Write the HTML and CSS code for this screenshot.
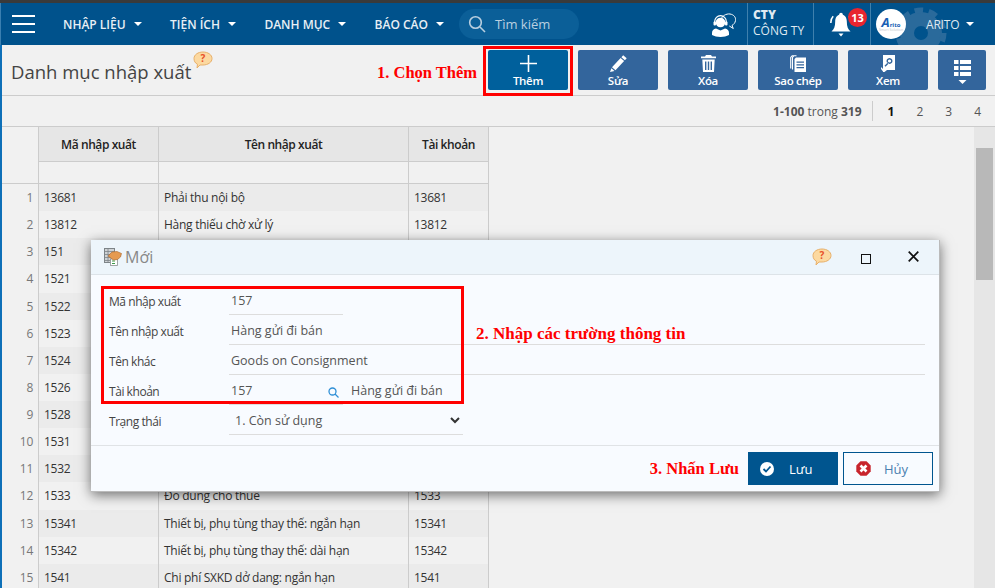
FILE: index.html
```html
<!DOCTYPE html>
<html lang="vi">
<head>
<meta charset="utf-8">
<title>Danh mục nhập xuất</title>
<link rel="stylesheet" href="styles.css">
</head>
<body>
<div class="topline"></div>
<header class="nav">
  <button class="burger" aria-label="menu"><i></i><i></i><i></i></button>
  <nav class="menu">
    <a>NHẬP LIỆU<b class="caret"></b></a>
    <a>TIỆN ÍCH<b class="caret"></b></a>
    <a>DANH MỤC<b class="caret"></b></a>
    <a>BÁO CÁO<b class="caret"></b></a>
  </nav>
  <div class="search">
    <svg width="18" height="18" viewBox="0 0 18 18" fill="none" stroke="#b9cfe0" stroke-width="1.6"><circle cx="7.5" cy="7.5" r="5.8"/><path d="M12 12l5 5"/></svg>
    <span>Tìm kiếm</span>
  </div>
  <div class="nav-right">
    <div class="support">
      <svg width="24" height="24" viewBox="0 0 24 24"><path d="M9 6.500C10 3 14 .5 18 1c4 .6 6 3.500 5.500 6.500-.3 2.500-2 4-3.500 5l1.300 3-4-2.500" fill="none" stroke="#fff" stroke-width="1"/><circle cx="8.500" cy="9.500" r="4.800" fill="#fff"/><path d="M2.700 10V8.500a5.800 5.800 0 0 1 11.600 0V10" fill="none" stroke="#fff" stroke-width="1.200"/><rect x="1.500" y="8.500" width="2.500" height="4" rx="1" fill="#fff"/><rect x="13" y="8.500" width="2.500" height="4" rx="1" fill="#fff"/><path d="M4 15.500l4.500 2 4.500-2c2.500.5 4 2 4 4.500v2c-2.500 1.200-5 2-8.500 2S2.500 23 0 22v-2c0-2.500 1.500-4 4-4.500z" fill="#fff"/></svg>
    </div>
    <div class="company"><strong>CTY</strong><span>CÔNG TY</span></div>
    <div class="bell">
      <svg width="22" height="25" viewBox="0 0 22 25" fill="#fff"><circle cx="11" cy="2.500" r="1.800"/><path d="M11 2.500c3.800 0 5.800 3 5.800 7 0 5 1.300 8 3.700 10H1.500c2.400-2 3.700-5 3.700-10 0-4 2-7 5.800-7z"/><path d="M8.500 21.500h5L11 24.500z"/><path d="M.9 11c-.2-2.800.6-5 2.300-6.800M21.100 11c.2-2.800-.6-5-2.300-6.800" fill="none" stroke="#fff" stroke-width="1.600"/></svg>
      <span class="badge">13</span>
    </div>
    <div class="user">
      <svg class="gear" width="52" height="52" viewBox="-26 -26 52 52" fill="none" stroke="#2a6a9b"><circle r="14" stroke-width="14"/><circle r="22.500" stroke-width="6" stroke-dasharray="8.500 5.637"/></svg>
      <span class="avatar"><span class="logo"><span class="logo-a">A</span><span class="logo-t">rito</span></span><span class="logo-s">Smart Solution</span></span>
      <span class="uname">ARITO</span><b class="caret"></b>
    </div>
  </div>
</header>

<main class="page">
  <section class="titlebar">
    <h1>Danh mục nhập xuất</h1>
    <svg class="help help-title" width="20" height="18" viewBox="0 0 20 18"><path d="M10 1c5 0 9 2.800 9 6.500S15 14 10 14H7l-3 3 .5-3.700C2.200 12.200 1 10 1 7.500 1 3.800 5 1 10 1z" fill="#fcd9a0" stroke="#e8b06a"/><text x="10" y="11" text-anchor="middle" class="help-q">?</text></svg>
    <span class="note note-1">1. Chọn Thêm</span>
    <div class="tools">
      <button class="tool primary">
        <svg width="17" height="17" viewBox="0 0 17 17" stroke="#fff" stroke-width="1.600"><path d="M8.500 0v17M0 8.500h17"/></svg>
        <span>Thêm</span>
      </button>
      <button class="tool">
        <svg width="17" height="17" viewBox="0 0 17 17" fill="#fff"><path d="M13.200.3l3.500 3-1.800 2-3.500-3.100zM10.600 3l3.500 3.100L5.500 15.300 2 12.300zM1.400 13.200l3.100 2.800L0 17z"/></svg>
        <span>Sửa</span>
      </button>
      <button class="tool">
        <svg width="15" height="17" viewBox="0 0 15 17" fill="#fff"><path fill-rule="evenodd" d="M5 0h5l1 1.500h4V3.200H0V1.500h4zM1.300 4.500h12.400l-.7 12.500H2zM4 6.500v8.500h1.400V6.500zM6.800 6.500v8.500h1.400V6.500zM9.600 6.500v8.500H11V6.500z"/></svg>
        <span>Xóa</span>
      </button>
      <button class="tool">
        <svg width="16" height="17" viewBox="0 0 16 17" fill="none"><path d="M4.500.7H2.200L.7 2.500v11M6.500.7H4L2.500 2.500v12" stroke="#fff" stroke-width="1.100"/><path fill="#fff" fill-rule="evenodd" d="M6 2.500h10V17H4.500V4zM6.500 6.500v1.200h7.500V6.500zM6.500 9.300v1.200h7.500V9.300zM6.500 12.100v1.200h7.500v-1.200z"/></svg>
        <span>Sao chép</span>
      </button>
      <button class="tool">
        <svg width="14" height="17" viewBox="0 0 14 17" fill="#fff"><path fill-rule="evenodd" d="M2 0h12v15H6l-2.500 2H2zM8.500 3a3 3 0 1 0 .01 0zM8.500 4.400a1.600 1.600 0 1 1-.01 0zM6.700 7.500L3.500 10.800l1 1 3.200-3.300z"/><path d="M0 12l3 3-1 1.500L0 14z"/></svg>
        <span>Xem</span>
      </button>
      <button class="tool narrow">
        <svg width="17" height="24" viewBox="0 0 17 24" fill="#fff"><path d="M0 0h4.500v4H0zM6 0h11v4H6zM0 6h4.500v4H0zM6 6h11v4H6zM0 12h4.500v4H0zM6 12h11v4H6zM4.500 20h8l-4 4z"/></svg>
      </button>
    </div>
  </section>

  <section class="pager">
    <span class="count"><b>1-100</b> trong <b>319</b></span>
    <span class="pages"><b>1</b><a>2</a><a>3</a><a>4</a></span>
  </section>

  <section class="content">
    <div class="grid">
      <div class="gh idx"></div><div class="gh">Mã nhập xuất</div><div class="gh">Tên nhập xuất</div><div class="gh">Tài khoản</div>
      <div class="gf idx"></div><div class="gf"></div><div class="gf"></div><div class="gf"></div>

      <div class="c n odd">1</div><div class="c odd">13681</div><div class="c odd">Phải thu nội bộ</div><div class="c odd">13681</div>
      <div class="c n">2</div><div class="c">13812</div><div class="c">Hàng thiếu chờ xử lý</div><div class="c">13812</div>
      <div class="c n odd">3</div><div class="c odd">151</div><div class="c odd"></div><div class="c odd"></div>
      <div class="c n">4</div><div class="c">1521</div><div class="c"></div><div class="c"></div>
      <div class="c n odd">5</div><div class="c odd">1522</div><div class="c odd"></div><div class="c odd"></div>
      <div class="c n">6</div><div class="c">1523</div><div class="c"></div><div class="c"></div>
      <div class="c n odd">7</div><div class="c odd">1524</div><div class="c odd"></div><div class="c odd"></div>
      <div class="c n">8</div><div class="c">1526</div><div class="c"></div><div class="c"></div>
      <div class="c n odd">9</div><div class="c odd">1528</div><div class="c odd"></div><div class="c odd"></div>
      <div class="c n">10</div><div class="c">1531</div><div class="c"></div><div class="c"></div>
      <div class="c n odd">11</div><div class="c odd">1532</div><div class="c odd"></div><div class="c odd"></div>
      <div class="c n">12</div><div class="c">1533</div><div class="c">Đồ dùng cho thuê</div><div class="c">1533</div>
      <div class="c n odd">13</div><div class="c odd">15341</div><div class="c odd">Thiết bị, phụ tùng thay thế: ngắn hạn</div><div class="c odd">15341</div>
      <div class="c n">14</div><div class="c">15342</div><div class="c">Thiết bị, phụ tùng thay thế: dài hạn</div><div class="c">15342</div>
      <div class="c n odd">15</div><div class="c odd">1541</div><div class="c odd">Chi phí SXKD dở dang: ngắn hạn</div><div class="c odd">1541</div>
    </div>
    <div class="scrollbar"><div class="thumb"></div></div>
  </section>
</main>

<div class="redbox redbox-add"></div>

<div class="modal">
  <div class="modal-head">
    <svg width="18" height="18" viewBox="0 0 18 18"><rect x=".5" y=".5" width="10" height="14" fill="#cfd3d6" stroke="#7d8488"/><path d="M.5 3.500h10M.5 6.500h10M.5 9.500h10M.5 12.500h10M4 .5v14" stroke="#7d8488" stroke-width=".8"/><rect x="6.500" y="11" width="7" height="6.500" fill="#fff" stroke="#8a8f92" stroke-width=".8"/><path d="M8 13h3M8 15.500h3" stroke="#3a9a4a"/><path d="M4 8l4-4 5-.5 4.500 2-1 3.500-3 2.500-4 .5z" fill="#e59a50" stroke="#a8652a" stroke-width=".6"/></svg>
    <span class="modal-title">Mới</span>
    <svg class="help" width="20" height="18" viewBox="0 0 20 18"><path d="M10 1c5 0 9 2.800 9 6.500S15 14 10 14H7l-3 3 .5-3.700C2.200 12.200 1 10 1 7.500 1 3.800 5 1 10 1z" fill="#fcd9a0" stroke="#e8b06a"/><text x="10" y="11" text-anchor="middle" class="help-q">?</text></svg>
    <span class="win-max"></span>
    <svg class="win-close" width="11" height="11" viewBox="0 0 11 11" stroke="#111" stroke-width="1.700"><path d="M.7.700l9.600 9.600M10.300.700L.7 10.300"/></svg>
  </div>
  <form class="modal-body">
    <div class="row"><label>Mã nhập xuất</label><div class="val short">157</div></div>
    <div class="row"><label>Tên nhập xuất</label><div class="val">Hàng gửi đi bán</div></div>
    <div class="row"><label>Tên khác</label><div class="val">Goods on Consignment</div></div>
    <div class="row"><label>Tài khoản</label><div class="val short">157</div>
      <svg class="lookup" width="11" height="11" viewBox="0 0 11 11" fill="none" stroke="#2f8fd6" stroke-width="1.300"><circle cx="4.500" cy="4.500" r="3.500"/><path d="M7 7l3.500 3.500"/></svg>
      <span class="acc-name">Hàng gửi đi bán</span></div>
    <div class="row"><label>Trạng thái</label><div class="val select"><span>1. Còn sử dụng</span>
      <svg width="10" height="7" viewBox="0 0 10 7" fill="none" stroke="#333" stroke-width="2"><path d="M1 1l4 4 4-4"/></svg></div></div>
    <div class="redbox redbox-form"></div>
    <span class="note note-2">2. Nhập các trường thông tin</span>
  </form>
  <div class="modal-foot">
    <span class="note note-3">3. Nhấn Lưu</span>
    <button class="btn save">
      <svg width="14" height="14" viewBox="0 0 14 14"><circle cx="7" cy="7" r="7" fill="#fff"/><path d="M3.500 7l2.500 2.500 4.500-5" fill="none" stroke="#00558f" stroke-width="1.800"/></svg>
      <span>Lưu</span>
    </button>
    <button class="btn cancel">
      <svg width="15" height="15" viewBox="0 0 15 15"><path d="M4.500.3h6l4.200 4.200v6l-4.200 4.200h-6L.3 10.500v-6z" fill="#c8242c"/><path d="M4.500 4.500l6 6M10.500 4.500l-6 6" stroke="#fff" stroke-width="2.600"/></svg>
      <span>Hủy</span>
    </button>
  </div>
</div>
</body>
</html>
```
FILE: styles.css
```css
* { box-sizing: border-box; }
html, body { margin: 0; height: 100%; overflow: hidden; }
body {
  width: 995px; height: 588px; position: relative;
  font: 12px "Open Sans", "Noto Sans", sans-serif;
  color: #333; background: #f1f1f1;
  display: flex; flex-direction: column;
}
button { font: inherit; border: 0; padding: 0; }

.topline { height: 3px; background: #3a3a3a; flex: none; }
.nav {
  height: 42px; flex: none; display: flex; align-items: center;
  background: #00528c; color: #fff; border-left: 1px solid #3a7fb0;
}
.burger { width: 23px; display: flex; flex-direction: column; gap: 6px; margin-left: 11px; background: none; }
.burger i { display: block; height: 2px; background: #fff; }
.menu { display: flex; margin-left: 28px; gap: 28.400px; font-weight: 600; color: #e8eff5; }
.menu a { display: flex; align-items: center; }
.caret { display: inline-block; border: 4px solid transparent; border-top: 4px solid #fff; border-bottom: 0; margin-left: 8px; }
.search {
  margin-left: 15px; width: 120px; height: 30px; border-radius: 15px;
  background: #0b5f98; display: flex; align-items: center; gap: 9px; padding-left: 9px;
  color: #b9cfe0; font-size: 13px;
}
.nav-right { margin-left: auto; display: flex; align-items: stretch; height: 42px; }
.support { width: 35px; padding-top: 10px; }
.company { width: 66px; border-left: 1px solid #3f80ad; padding: 4px 0 0 5px; display: flex; flex-direction: column; line-height: 16px; color: #dfe9f1; }
.company strong { font-weight: 800; }
.bell { width: 57px; border-left: 1px solid #3f80ad; position: relative; padding: 9px 0 0 16px; }
.badge {
  position: absolute; left: 34px; top: 5px; width: 19px; height: 19px; border-radius: 50%;
  background: #e8252f; color: #fff; font-weight: 700; font-size: 11px; text-align: center; line-height: 19px;
}
.user { width: 125px; border-left: 1px solid #3f80ad; display: flex; align-items: center; padding-left: 5px; position: relative; overflow: hidden; }
.gear { position: absolute; left: 24px; top: 4px; }
.avatar { width: 30px; height: 30px; border-radius: 50%; background: #fff; position: relative; display: flex; flex-direction: column; align-items: center; justify-content: center; flex: none; overflow: hidden; }
.logo { color: #1a5fb4; font-weight: 700; font-size: 6px; line-height: 12px; height: 12px; display: flex; align-items: baseline; }
.logo-a { font-size: 13px; font-style: italic; line-height: 12px; }
.logo-s { color: #c4c8cc; font-size: 3.500px; line-height: 4px; white-space: nowrap; }
.uname { margin-left: 20px; position: relative; color: #dfe9f1; letter-spacing: -.2px; }
.user .caret { position: relative; margin-left: 7px; }

.page { flex: 1; min-height: 0; display: flex; flex-direction: column; border-left: 2px solid #0e70b8; }
.titlebar { height: 51px; flex: none; display: flex; align-items: center; border-bottom: 1px solid #ccc; position: relative; }
h1 { margin: 0 0 0 9px; font-size: 18.500px; font-weight: 400; color: #444; position: relative; top: 1px; }
.help-title { margin: -21px 0 0 2px; }
.help-q { font: 700 10px "Open Sans", sans-serif; fill: #e8502a; }
.note { font: 700 16.500px "Liberation Serif", serif; color: #f00; white-space: nowrap; }
.note-1 { position: absolute; left: 375px; top: 18px; }
.tools { margin-left: auto; margin-right: 9px; display: flex; gap: 10px; }
.tool {
  width: 80px; height: 40px; border-radius: 2px; background: #33659c; color: #fff;
  display: flex; flex-direction: column; align-items: center;
  font-weight: 600; font-size: 11.500px; letter-spacing: -.3px; padding-top: 5px;
}
.tool svg { flex: none; }
.tool span { line-height: 15px; margin-top: 1px; }
.tool.primary { background: #00609c; }
.tool.narrow { width: 48px; padding-top: 10px; }

.pager { height: 31px; flex: none; display: flex; align-items: center; justify-content: flex-end; border-bottom: 1px solid #ccc; color: #555; padding-right: 14px; }
.count b { font-weight: 700; }
.pages { margin-left: 10px; padding-left: 15px; border-left: 1px solid #ccc; height: 20px; display: flex; gap: 22px; align-items: center; }
.pages b { color: #111; }

.content { flex: 1; min-height: 0; display: flex; justify-content: space-between; overflow: hidden; }
.grid {
  width: 487px; display: grid;
  grid-template-columns: 37px 120px 250px 80px;
  grid-auto-rows: 27.14px; grid-template-rows: 34px 23px;
  align-content: start;
}
.gh { background: #e6e6e6; border-right: 1px solid #ccc; display: flex; align-items: center; justify-content: center; font-weight: 600; color: #222; letter-spacing: -.42px; }
.gh.idx { background: #f1f1f1; }
.gf { border-top: 1px solid #ccc; border-bottom: 1px solid #ccc; border-right: 1px solid #ccc; }
.gf.idx { border-top: 0; }
.c { border-right: 1px solid #ccc; padding-left: 5px; line-height: 27px; white-space: nowrap; overflow: hidden; color: #333; letter-spacing: -.27px; }
.c.n { text-align: right; padding: 0 5px 0 0; color: #777; }
.odd { background: #ebebeb; }
.c.n.odd { background: #f1f1f1; }
.scrollbar { width: 21px; background: #e6e6e6; padding: 21px 2px 0; }
.thumb { width: 17px; height: 132px; background: #b8b8b8; }

.redbox { position: absolute; border: 3px solid #f00; pointer-events: none; }
.redbox-add { left: 483px; top: 46px; width: 90px; height: 50px; }

.modal {
  position: absolute; left: 91px; top: 240px; width: 849px; height: 252px;
  background: #f8fbff; border-right: 1px solid #bbb; border-bottom: 1px solid #bbb;
  box-shadow: 0 3px 12px rgba(0,0,0,.55);
  display: flex; flex-direction: column;
}
.modal-head { height: 35px; flex: none; background: #edf5fb; border-bottom: 1px solid #dde3e8; display: flex; align-items: center; padding-left: 13px; }
.modal-title { margin-left: 3px; font-size: 16px; color: #888; }
.modal-head .help { margin-left: auto; }
.win-max { width: 10px; height: 10px; border: 1.500px solid #111; margin: 4px 0 0 29px; }
.win-close { margin: 0 20px 2px 37px; }
.modal-body { flex: 1; padding: 10px 14px 0 18px; position: relative; }
.row { height: 30px; display: flex; align-items: center; position: relative; }
.row label { width: 120px; flex: none; color: #444; letter-spacing: -.45px; position: relative; top: 1px; }
.val { flex: 1; height: 30px; line-height: 31px; border-bottom: 1px solid #ddd; padding-left: 2px; color: #555; font-size: 12.500px; }
.val.short { flex: none; width: 114px; }
.val.select { flex: none; width: 234px; padding: 1px 3px 0 6px; display: flex; align-items: center; justify-content: space-between; }
.lookup { margin-left: -15px; position: relative; top: 2px; }
.acc-name { margin-left: 12px; color: #555; font-size: 12.500px; position: relative; top: .5px; }
.redbox-form { left: 10px; top: 11px; width: 363px; height: 118px; }
.note-2 { position: absolute; left: 385px; top: 49px; font-size: 17px; }
.modal-foot { height: 46px; flex: none; border-top: 1px solid #e0e3e6; display: flex; align-items: flex-start; justify-content: flex-end; padding: 6px 6px 0 0; gap: 5px; }
.note-3 { margin: 7px 4px 0 0; }
.btn { width: 90px; height: 33px; display: flex; align-items: center; gap: 15px; padding-left: 12px; font-size: 13px; }
.save { background: #00558f; color: #fff; }
.cancel { background: #f8fbff; color: #4a7fb0; border: 1px solid #00558f; gap: 13px; }
```
